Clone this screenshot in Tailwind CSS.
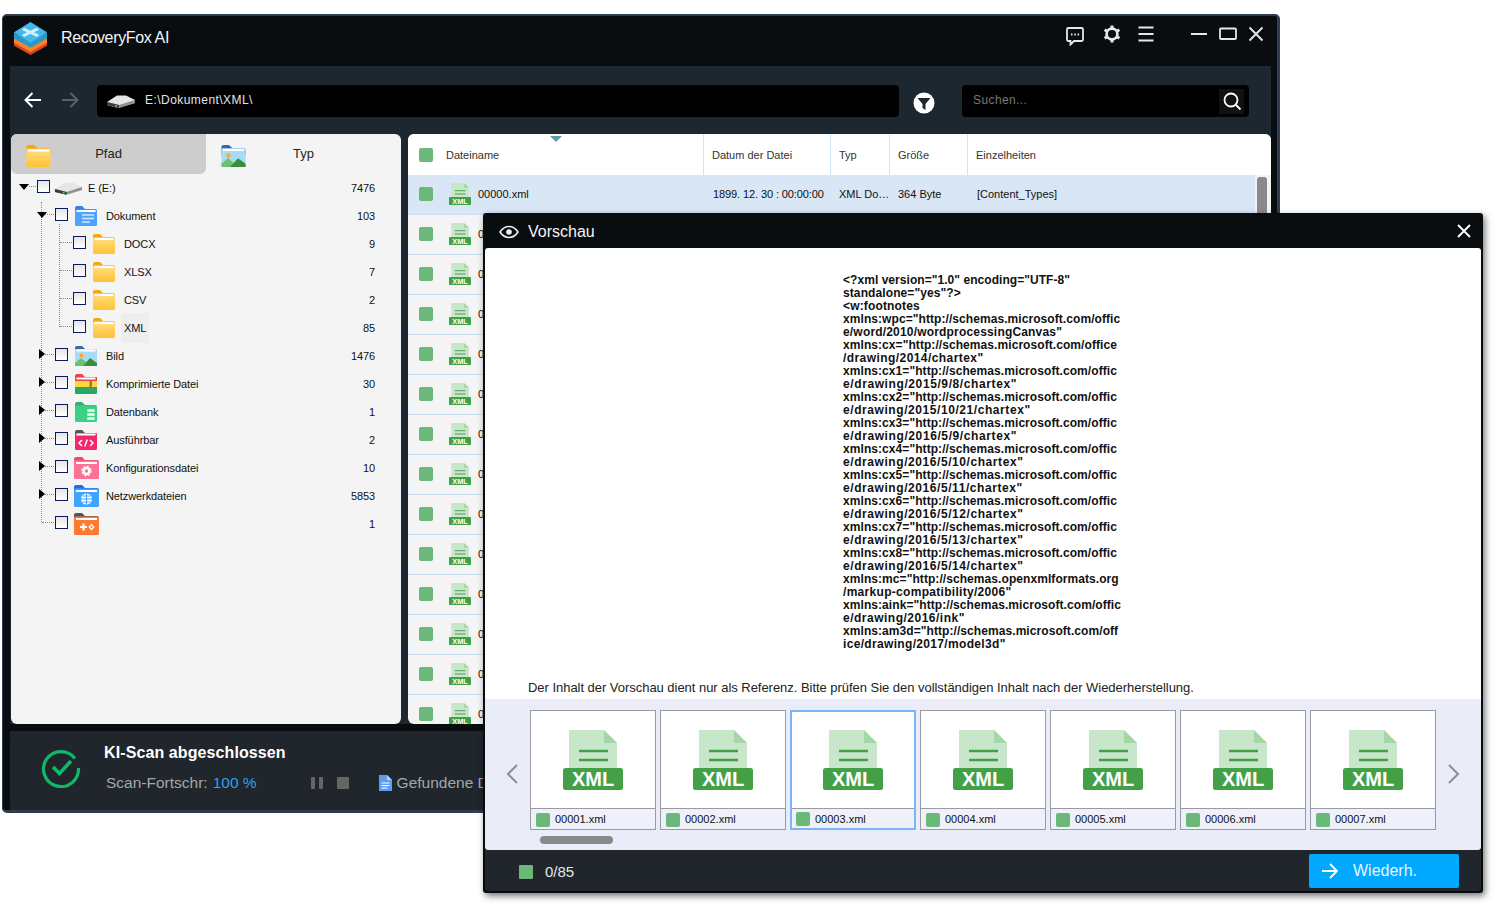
<!DOCTYPE html>
<html lang="en">
<head>
<meta charset="UTF-8">
<title>RecoveryFox AI</title>
<script src="https://cdn.jsdelivr.net/npm/@tailwindcss/browser@4"></script>
</head>
<body class="bg-white font-['Liberation_Sans',Arial,sans-serif] w-[1508px] h-[917px] overflow-hidden relative">

<!-- shared icons -->
<svg class="absolute w-0 h-0" width="0" height="0">
  <defs>
    <linearGradient id="yel" x1="0" y1="0" x2="0" y2="1"><stop offset="0" stop-color="#ffdf86"/><stop offset="1" stop-color="#ffc233"/></linearGradient>
    <symbol id="f-yellow" viewBox="0 0 22 20"><path d="M0 2a2 2 0 0 1 2-2h5l3 3h10a2 2 0 0 1 2 2v4H0z" fill="#f9a50c"/><rect y="3.500" width="22" height="16.500" rx="1.500" fill="url(#yel)"/><rect x="1.500" y="4" width="19" height="2" fill="#fff"/></symbol>
    <symbol id="f-blue" viewBox="0 0 22 20"><path d="M0 2a2 2 0 0 1 2-2h5l3 3h10a2 2 0 0 1 2 2v4H0z" fill="#2f80f5"/><rect y="3.500" width="22" height="16.500" rx="1.500" fill="#4da3ff"/><rect x="1.500" y="4" width="19" height="2" fill="#fff"/><path d="M7 9h12M7 12.500h12M7 16h8" stroke="#d6e9ff" stroke-width="1.600"/></symbol>
    <symbol id="f-pic" viewBox="0 0 22 20"><path d="M0 2a2 2 0 0 1 2-2h5l3 3h10a2 2 0 0 1 2 2v4H0z" fill="#2f6da8"/><rect y="3" width="22" height="17" rx="1" fill="#a8dcf5"/><rect x="1.500" y="3.500" width="19" height="2" fill="#fff"/><circle cx="6.500" cy="9.500" r="2" fill="#ffa726"/><path d="M0 20v-3l6-5 6 5v3z" fill="#6cc16e"/><path d="M8 20l7-8 7 5v3z" fill="#388e3c"/></symbol>
    <symbol id="f-zip" viewBox="0 0 22 20"><path d="M0 2a2 2 0 0 1 2-2h5l3 3h10a2 2 0 0 1 2 2v4H0z" fill="#ef3f4f"/><rect y="3" width="22" height="7" fill="#ef3f4f"/><rect y="7" width="22" height="7" fill="#fbd83a"/><path d="M0 13h22v6a1 1 0 0 1-1 1H1a1 1 0 0 1-1-1z" fill="#23a866"/><rect x="1.500" y="3.500" width="19" height="2" fill="#fff"/><path d="M14.500 7h2.500v10h-2.500z" fill="#8b7a5a"/></symbol>
    <symbol id="f-db" viewBox="0 0 22 20"><path d="M0 2a2 2 0 0 1 2-2h5l3 3h10a2 2 0 0 1 2 2v4H0z" fill="#2fb573"/><rect y="3.500" width="22" height="16.500" rx="1.500" fill="#3ccf86"/><rect x="12" y="7" width="8" height="3" rx="1.500" fill="#d8f7e6"/><rect x="12" y="11" width="8" height="3" rx="1.500" fill="#d8f7e6"/><rect x="12" y="15" width="8" height="3" rx="1.500" fill="#d8f7e6"/></symbol>
    <symbol id="f-exe" viewBox="0 0 22 20"><path d="M0 2a2 2 0 0 1 2-2h5l3 3h10a2 2 0 0 1 2 2v4H0z" fill="#555"/><rect y="3" width="22" height="17" rx="1.500" fill="#f2286b"/><rect x="1.500" y="3.500" width="19" height="2" fill="#fff"/><path d="M7 10l-3 3 3 3M15 10l3 3-3 3M12.300 9.500l-2.600 7" fill="none" stroke="#fff" stroke-width="1.500"/></symbol>
    <symbol id="f-cfg" viewBox="0 0 25 22"><path d="M0 2a2 2 0 0 1 2-2h6l3 3h12a2 2 0 0 1 2 2v4H0z" fill="#ef4a6c"/><rect y="3.500" width="25" height="18.500" rx="1.500" fill="#ff7097"/><rect x="2" y="5" width="21" height="2" fill="#fff"/><circle cx="12.500" cy="14" r="3" fill="none" stroke="#fff" stroke-width="2.400"/><circle cx="12.500" cy="14" r="4.600" fill="none" stroke="#fff" stroke-width="1.200" stroke-dasharray="2 1.600"/></symbol>
    <symbol id="f-net" viewBox="0 0 25 22"><path d="M0 2a2 2 0 0 1 2-2h6l3 3h12a2 2 0 0 1 2 2v4H0z" fill="#1f6af0"/><rect y="3.500" width="25" height="18.500" rx="1.500" fill="#3fa4ff"/><rect x="2" y="5" width="21" height="2" fill="#fff"/><circle cx="12.500" cy="14" r="5.500" fill="#fff"/><path d="M7 14h11M12.500 8.500v11M8.500 11h8M8.500 17h8" stroke="#3fa4ff" stroke-width="1"/></symbol>
    <symbol id="f-game" viewBox="0 0 25 22"><path d="M0 2a2 2 0 0 1 2-2h6l3 3h12a2 2 0 0 1 2 2v4H0z" fill="#555"/><rect y="3.500" width="25" height="18.500" rx="1.500" fill="#ff7a2e"/><rect x="2" y="5" width="21" height="2" fill="#fff"/><path d="M6 14h7M9.500 10.500v7" stroke="#fff" stroke-width="2.200"/><path d="M17.500 11.500l2.200 2.500-2.200 2.500-2.200-2.500z" fill="none" stroke="#fff" stroke-width="1.200"/></symbol>
    <symbol id="drive" viewBox="0 0 30 15"><path d="M1 8L11 1.500h9L29 6v3L12 14 1 11z" fill="#e6e6e6"/><path d="M1 8l12 3 16-5v3L13 14 1 11z" fill="#8f8f8f"/><path d="M1 8l12 3v3L1 11z" fill="#3c3c3c"/><rect x="9" y="11" width="2" height="1.500" fill="#3ddc6a"/></symbol>
    <symbol id="xml" viewBox="0 0 60 60"><path d="M6 0h35l13 13v30H6z" fill="#c8e6c9"/><path d="M41 0l13 13H41z" fill="#a5d6a7"/><path d="M16 21h29M16 30h29" stroke="#43a047" stroke-width="2.600"/><rect y="38" width="60" height="22" rx="2.500" fill="#43a047"/><text x="30" y="56" text-anchor="middle" font-family="Liberation Sans, Arial, sans-serif" font-weight="700" font-size="20" fill="#fff">XML</text></symbol>
  </defs>
</svg>

<!-- main window -->
<div class="absolute left-[2px] top-[14px] w-[1278px] h-[799px] flex flex-col bg-[#0a0d10] border border-[#2f3d50] border-t-2 border-r-[3px] border-b-[3px] rounded-[5px] overflow-hidden">
  <!-- title bar -->
  <div class="h-[50px] shrink-0 flex items-center text-white relative">
    <svg class="ml-[11px] -mt-[5px] w-[33px] h-[33px]" viewBox="0 0 32 32">
      <path d="M0 17l16 9 16-9v6l-16 9-16-9z" fill="#d8421d"/>
      <path d="M0 14l16 9 16-9v6l-16 9-16-9z" fill="#f5862a"/>
      <path d="M0 10l16 9 16-9v6l-16 9-16-9z" fill="#2f97c4"/>
      <path d="M16 0l16 10-16 10L0 10z" fill="#42b9ec"/>
      <path d="M10 5.500l6 3 6-3 2.500 2-5 2.500 5 2.500-2.500 2-6-3-6 3-2.500-2 5-2.500-5-2.500z" fill="#d3eefa"/>
    </svg>
    <span class="ml-[14px] -mt-[7px] text-[16px] tracking-[-0.35px] text-[#f2f5f7]">RecoveryFox AI</span>
    <div class="ml-auto flex items-center -mt-[14px] mr-[11px]">
      <svg class="w-5 h-5 mt-[4px]" viewBox="0 0 20 20" fill="none" stroke="#e8e8e8" stroke-width="1.800"><path d="M3.500 2h13A1.500 1.500 0 0 1 18 3.500v10a1.500 1.500 0 0 1-1.500 1.500H9l-3.500 3.500V15h-2A1.500 1.500 0 0 1 2 13.500v-10A1.500 1.500 0 0 1 3.500 2z"/><path d="M6 8.500h1.500M9.300 8.500h1.500M12.600 8.500h1.500" stroke-width="2"/></svg>
      <svg class="w-5 h-5 ml-[17px]" viewBox="0 0 20 20" fill="none" stroke="#e8e8e8"><circle cx="10" cy="10" r="5.400" stroke-width="2.600"/><path d="M10 1.500v3M10 15.500v3M2.600 5.750l2.600 1.500M14.800 12.750l2.600 1.500M2.600 14.250l2.600-1.500M14.800 7.250l2.600-1.500" stroke-width="3"/></svg>
      <svg class="w-5 h-5 ml-[14px]" viewBox="0 0 20 20" stroke="#e8e8e8" stroke-width="1.800"><path d="M2.500 3.500h15M2.500 10h15M2.500 16.500h15"/></svg>
      <svg class="w-5 h-5 ml-[33px]" viewBox="0 0 20 20" stroke="#e8e8e8" stroke-width="1.800"><path d="M2 10h16"/></svg>
      <svg class="w-5 h-5 ml-[9px]" viewBox="0 0 20 20" fill="none" stroke="#e8e8e8" stroke-width="1.800"><rect x="2" y="4.500" width="16" height="10.500" rx="1"/></svg>
      <svg class="w-5 h-5 ml-[8px]" viewBox="0 0 20 20" stroke="#e8e8e8" stroke-width="1.800"><path d="M3.500 3.500l13 13M16.500 3.500l-13 13"/></svg>
    </div>
  </div>

  <!-- body -->
  <div class="flex-1 mx-[7px] bg-[#1c2730] flex flex-col min-h-0 w-[1261px]">
    <!-- toolbar -->
    <div class="h-[68px] shrink-0 flex items-center">
      <svg class="w-5 h-5 ml-[13px] -mt-[1px]" viewBox="0 0 20 20" fill="none" stroke="#fff" stroke-width="2"><path d="M18 10H3M9.500 3l-7 7 7 7"/></svg>
      <svg class="w-5 h-5 ml-[17px] -mt-[1px]" viewBox="0 0 20 20" fill="none" stroke="#5a6268" stroke-width="2"><path d="M2 10h15M10.500 3l7 7-7 7"/></svg>
      <div class="ml-[17px] w-[802px] h-8 mt-[2px] bg-black rounded-[4px] flex items-center">
        <svg class="w-[30px] h-[15px] ml-[9px]"><use href="#drive"/></svg>
        <span class="ml-[9px] -mt-[2px] text-[12px] tracking-[0.45px] text-[#e4e4e4]">E:\Dokument\XML\</span>
      </div>
      <svg class="w-[22px] h-[22px] ml-[14px] mt-[5px]" viewBox="0 0 22 22"><circle cx="11" cy="11" r="10.500" fill="#fff"/><path d="M4.500 6h13l-5 6v6l-3-2v-4z" fill="#1c2730"/></svg>
      <div class="ml-[27px] w-[287px] h-8 mt-[2px] bg-black rounded-[4px] flex items-center">
        <span class="ml-[11px] -mt-[2px] text-[12px] tracking-[0.4px] text-[#777]">Suchen...</span>
        <div class="ml-auto mr-[5px] w-[25px] h-[25px] bg-[#111] flex items-center justify-center">
          <svg class="w-5 h-5" viewBox="0 0 20 20" fill="none" stroke="#fff" stroke-width="1.800"><circle cx="9" cy="9" r="6.500"/><path d="M14 14l4.500 4.500"/></svg>
        </div>
      </div>
    </div>

    <!-- panels -->
    <div class="h-[590px] shrink-0 flex pl-[1px] gap-[7px]">
      <!-- tree panel -->
      <div class="w-[390px] bg-[#f4f4f4] rounded-[6px] overflow-hidden flex flex-col">
        <div class="h-10 shrink-0 flex text-[13px] text-[#222]">
          <div class="w-[195px] bg-[#cdcdcd] rounded-b-[6px] flex items-center relative">
            <svg class="absolute left-[15px] top-[11px] w-[25px] h-[22px]"><use href="#f-yellow"/></svg>
            <span class="w-full text-center">Pfad</span>
          </div>
          <div class="w-[195px] flex items-center relative">
            <svg class="absolute left-[15px] top-[11px] w-[25px] h-[22px]"><use href="#f-pic"/></svg>
            <span class="w-full text-center">Typ</span>
          </div>
        </div>
        <div id="tree" class="relative"></div>
      </div>

      <!-- file list panel -->
      <div class="w-[863px] bg-[#f4f4f4] rounded-[6px] overflow-hidden flex flex-col relative">
        <div class="h-[41px] shrink-0 bg-white flex items-center text-[11px] text-[#333] relative">
          <span class="absolute left-[142px] top-[2px] w-0 h-0 border-l-[6px] border-r-[6px] border-t-[6px] border-l-transparent border-r-transparent border-t-[#5f9bab]"></span>
          <span class="w-[14px] h-[14px] rounded-[2px] bg-[#6bb87a] ml-[11px]"></span>
          <span class="w-[271px] pl-[13px] pt-[2px] h-full flex items-center border-r border-[#cfe4f5]">Dateiname</span>
          <span class="w-[127px] pl-[8px] pt-[2px] h-full flex items-center border-r border-[#cfe4f5]">Datum der Datei</span>
          <span class="w-[59px] pl-[8px] pt-[2px] h-full flex items-center border-r border-[#cfe4f5]">Typ</span>
          <span class="w-[78px] pl-[8px] pt-[2px] h-full flex items-center border-r border-[#cfe4f5]">Größe</span>
          <span class="pl-[8px] pt-[2px]">Einzelheiten</span>
        </div>
        <div id="rows" class="flex-1 min-h-0 overflow-hidden"></div>
        <div class="absolute right-[4px] top-[43px] w-[10px] h-[120px] bg-[#8a8a8a] rounded-[3px]"></div>
      </div>
    </div>

    <div class="h-[7px] shrink-0 bg-[#0a0d10]"></div>

    <!-- scan status -->
    <div class="flex-1 ml-[1px] bg-[#20262c] rounded-[6px] relative flex items-center">
      <svg class="ml-[30px] -mt-[6px] w-10 h-10" viewBox="0 0 40 40" fill="none" stroke="#10b968" stroke-width="3.200"><path d="M34 10.500A17.500 17.500 0 1 0 37.500 20"/><path d="M12 19l6.500 6.500L30 13" stroke-width="3.600"/></svg>
      <div class="ml-[23px] -mt-[6px] flex flex-col">
        <span class="text-[16px] font-bold tracking-[0.1px] text-white leading-5">KI-Scan abgeschlossen</span>
        <div class="mt-[10px] pl-[2px] flex items-center text-[15.500px] leading-5 text-[#a2a8ae]">
          <span>Scan-Fortschr:</span><span class="ml-[5px] text-[#2ea0f0]">100 %</span>
          <span class="ml-[54px] w-[4px] h-3 bg-[#666] rounded-[1px]"></span><span class="ml-[4px] w-[4px] h-3 bg-[#666] rounded-[1px]"></span>
          <span class="ml-[14px] w-3 h-3 bg-[#666] rounded-[1px]"></span>
          <svg class="ml-[29px] w-[14px] h-4" viewBox="0 0 14 16"><path d="M1 0h8l5 5v11H1z" fill="#5d9cf0"/><path d="M9 0l5 5H9z" fill="#b5d2f8"/><path d="M3.500 8h8M3.500 10.500h8M3.500 13h6" stroke="#fff" stroke-width="1"/></svg>
          <span class="ml-[5px] whitespace-nowrap">Gefundene Dateien</span>
        </div>
      </div>
    </div>
  </div>
</div>

<!-- preview window -->
<div class="absolute left-[483px] top-[213px] w-[1000px] h-[680px] flex flex-col bg-[#0a0d10] rounded-[3px] shadow-[2px_3px_7px_rgba(0,0,0,0.55)]">
  <div class="h-[35px] shrink-0 flex items-center text-white">
    <svg class="ml-[16px] mt-[2px] w-5 h-5" viewBox="0 0 20 20" fill="none" stroke="#eee" stroke-width="1.600"><path d="M1 10c2.500-3.800 5.500-5.500 9-5.500s6.500 1.700 9 5.500c-2.500 3.800-5.500 5.500-9 5.500S3.500 13.800 1 10z"/><circle cx="10" cy="10" r="2.800" fill="#eee" stroke="none"/></svg>
    <span class="ml-[9px] mt-[2px] text-[16px] text-[#f2f5f7]">Vorschau</span>
    <svg class="ml-auto mr-[11px] w-[16px] h-[16px]" viewBox="0 0 16 16" stroke="#fff" stroke-width="1.900"><path d="M2 2l12 12M14 2L2 14"/></svg>
  </div>
  <div class="ml-[2px] mr-[2px] bg-white h-[451px] shrink-0 flex flex-col rounded-t-[3px] overflow-hidden">
    <div class="pl-[358px] pt-[26px] flex-1 font-bold text-[12px] leading-[13px] text-[#111] whitespace-nowrap">
      <div class="tracking-[0.05px]">&lt;?xml version="1.0" encoding="UTF-8"</div>
      <div class="tracking-[0.1px]">standalone="yes"?&gt;</div>
      <div class="tracking-[0.15px]">&lt;w:footnotes</div>
      <div class="tracking-[0.07px]">xmlns:wpc="http://schemas.microsoft.com/offic</div>
      <div class="tracking-[0.18px]">e/word/2010/wordprocessingCanvas"</div>
      <div class="tracking-[0.07px]">xmlns:cx="http://schemas.microsoft.com/office</div>
      <div class="tracking-[0.43px]">/drawing/2014/chartex"</div>
      <div class="tracking-[0.07px]">xmlns:cx1="http://schemas.microsoft.com/offic</div>
      <div class="tracking-[0.6px]">e/drawing/2015/9/8/chartex"</div>
      <div class="tracking-[0.07px]">xmlns:cx2="http://schemas.microsoft.com/offic</div>
      <div class="tracking-[0.57px]">e/drawing/2015/10/21/chartex"</div>
      <div class="tracking-[0.07px]">xmlns:cx3="http://schemas.microsoft.com/offic</div>
      <div class="tracking-[0.6px]">e/drawing/2016/5/9/chartex"</div>
      <div class="tracking-[0.07px]">xmlns:cx4="http://schemas.microsoft.com/offic</div>
      <div class="tracking-[0.57px]">e/drawing/2016/5/10/chartex"</div>
      <div class="tracking-[0.07px]">xmlns:cx5="http://schemas.microsoft.com/offic</div>
      <div class="tracking-[0.57px]">e/drawing/2016/5/11/chartex"</div>
      <div class="tracking-[0.07px]">xmlns:cx6="http://schemas.microsoft.com/offic</div>
      <div class="tracking-[0.57px]">e/drawing/2016/5/12/chartex"</div>
      <div class="tracking-[0.07px]">xmlns:cx7="http://schemas.microsoft.com/offic</div>
      <div class="tracking-[0.57px]">e/drawing/2016/5/13/chartex"</div>
      <div class="tracking-[0.07px]">xmlns:cx8="http://schemas.microsoft.com/offic</div>
      <div class="tracking-[0.57px]">e/drawing/2016/5/14/chartex"</div>
      <div class="tracking-[0.07px]">xmlns:mc="http://schemas.openxmlformats.org</div>
      <div class="tracking-[0.3px]">/markup-compatibility/2006"</div>
      <div class="tracking-[0.07px]">xmlns:aink="http://schemas.microsoft.com/offic</div>
      <div class="tracking-[0.5px]">e/drawing/2016/ink"</div>
      <div class="tracking-[0.07px]">xmlns:am3d="http://schemas.microsoft.com/off</div>
      <div class="tracking-[0.33px]">ice/drawing/2017/model3d"</div>
    </div>
    <p class="pl-[43px] pb-[4px] text-[13px] tracking-[-0.035px] leading-[15px] text-[#222]">Der Inhalt der Vorschau dient nur als Referenz. Bitte prüfen Sie den vollständigen Inhalt nach der Wiederherstellung.</p>
  </div>
  <!-- thumbnails -->
  <div class="ml-[2px] mr-[2px] h-[151px] shrink-0 bg-[#eaedf7] rounded-b-[3px] relative">
    <div class="flex items-center pt-[11px]">
      <svg class="ml-[20px] mt-[8px] w-[14px] h-6" viewBox="0 0 14 24" fill="none" stroke="#8a8e99" stroke-width="2"><path d="M12 3L3 12l9 9"/></svg>
      <div id="thumbs" class="ml-[11px] flex gap-1"></div>
      <svg class="ml-[11px] mt-[8px] w-[14px] h-6" viewBox="0 0 14 24" fill="none" stroke="#8a8e99" stroke-width="2"><path d="M2 3l9 9-9 9"/></svg>
    </div>
    <div class="absolute left-[55px] bottom-[6px] w-[73px] h-2 rounded-[4px] bg-[#8a8a8a]"></div>
  </div>
  <div class="flex-1 bg-[#20262c] flex items-center rounded-b-[3px] ml-[2px] mr-[2px] mb-[2px]">
    <span class="ml-[34px] translate-y-[1px] w-[14px] h-[14px] rounded-[1px] bg-[#6bb87a]"></span>
    <span class="ml-[12px] translate-y-[2px] text-[15px] text-[#e4e6e8]">0/85</span>
    <button class="ml-auto mr-[22px] w-[150px] h-[34px] rounded-[2px] bg-[#00a8ff] flex items-center text-[16px] text-[#e8f6ff]">
      <svg class="ml-[12px] w-[18px] h-[18px]" viewBox="0 0 18 18" fill="none" stroke="#fff" stroke-width="1.800"><path d="M1 9h15M9 2l7 7-7 7"/></svg>
      <span class="ml-[14px]">Wiederh.</span>
    </button>
  </div>
</div>

<script>
  // tree rows: [level, icon, label, count, arrow]
  const treeData = [
    [0, "drive", "E (E:)", "7476", "down"],
    [1, "f-blue", "Dokument", "103", "down"],
    [2, "f-yellow", "DOCX", "9", ""],
    [2, "f-yellow", "XLSX", "7", ""],
    [2, "f-yellow", "CSV", "2", ""],
    [2, "f-yellow", "XML", "85", ""],
    [1, "f-pic", "Bild", "1476", "right"],
    [1, "f-zip", "Komprimierte Datei", "30", "right"],
    [1, "f-db", "Datenbank", "1", "right"],
    [1, "f-exe", "Ausführbar", "2", "right"],
    [1, "f-cfg", "Konfigurationsdatei", "10", "right"],
    [1, "f-net", "Netzwerkdateien", "5853", "right"],
    [1, "f-game", "", "1", ""],
  ];
  const pad = ["pl-[26px]", "pl-[44px]", "pl-[62px]"];
  let treeHtml = `
    <span class="absolute left-[30px] top-[28px] h-[320px] border-l border-dotted border-[#888]"></span>
    <span class="absolute left-[48px] top-[50px] h-[103px] border-l border-dotted border-[#888]"></span>`;
  treeData.forEach((r) => {
    const [lvl, icon, label, count, arrow] = r;
    const wide = icon === "f-cfg" || icon === "f-net" || icon === "f-game";
    let iconHtml;
    if (icon === "drive") iconHtml = `<svg class="ml-[4px] w-[29px] h-[15px]"><use href="#drive"/></svg><span class="ml-[5px]">${label}</span>`;
    else iconHtml = `<svg class="${wide ? "ml-[6px] w-[25px] h-[22px] mr-[7px]" : "ml-[7px] w-[22px] h-[20px] mr-[9px]"}"><use href="#${icon}"/></svg><span class="${label === "XML" ? "bg-[#eeeeee] -ml-[3px] px-[3px] py-[7px] leading-4" : ""}">${label}</span>`;
    let arrowHtml = "";
    if (arrow === "down") arrowHtml = `<span class="absolute ${lvl === 0 ? "left-[8px]" : "left-[26px]"} top-[10px] w-0 h-0 border-l-[5px] border-r-[5px] border-t-[6px] border-l-transparent border-r-transparent border-t-black"></span>`;
    if (arrow === "right") arrowHtml = `<span class="absolute left-[28px] top-[7px] w-0 h-0 border-t-[5px] border-b-[5px] border-l-[6px] border-t-transparent border-b-transparent border-l-black"></span>`;
    let stub = "";
    if (lvl === 0) stub = `<span class="absolute left-[18px] top-[12px] w-[7px] border-t border-dotted border-[#888]"></span>`;
    if (lvl === 1) stub = `<span class="absolute left-[31px] top-[12px] w-[12px] border-t border-dotted border-[#888]"></span>`;
    if (lvl === 2) stub = `<span class="absolute left-[49px] top-[12px] w-[12px] border-t border-dotted border-[#888]"></span>`;
    treeHtml += `<div class="relative h-7 flex items-center text-[11px] tracking-[-0.1px] text-[#111] ${pad[lvl]} pr-[26px]">
      ${stub}${arrowHtml}
      <span class="relative -translate-y-[2px] w-[13px] h-[13px] border border-[#0b1a5c] bg-gradient-to-b from-[#e4e4e4] to-white"></span>
      ${iconHtml}
      <span class="ml-auto">${count}</span>
    </div>`;
  });
  document.getElementById("tree").innerHTML = treeHtml;

  // file rows
  let rowsHtml = "";
  for (let i = 0; i < 14; i++) {
    const name = String(i).padStart(5, "0") + ".xml";
    const extra = i === 0 ? `
      <span class="absolute left-[305px] tracking-[-0.1px]">1899. 12. 30 : 00:00:00</span>
      <span class="absolute left-[431px]">XML Do…</span>
      <span class="absolute left-[490px]">364 Byte</span>
      <span class="absolute left-[569px]">[Content_Types]</span>` : "";
    rowsHtml += `<div class="relative h-10 shrink-0 flex items-center text-[11px] text-[#111] border-b border-[#c9def5] pb-[1px] mr-[16px] ${i === 0 ? "bg-[#d9e6f5]" : ""}">
      <span class="ml-[11px] w-[14px] h-[14px] rounded-[2px] bg-[#6bb87a]"></span>
      <svg class="ml-[16px] w-[22px] h-[22px]"><use href="#xml"/></svg>
      <span class="ml-[7px]">${name}</span>${extra}
    </div>`;
  }
  document.getElementById("rows").innerHTML = rowsHtml;

  // thumbnails
  let thumbHtml = "";
  for (let i = 1; i <= 7; i++) {
    const sel = i === 3;
    thumbHtml += `<div class="w-[126px] h-[120px] flex flex-col ${sel ? "border-2 border-[#7ab4fa]" : "border border-[#9a9aa2]"}">
      <div class="flex-1 bg-white flex justify-center items-start ${sel ? "pt-[18px]" : "pt-[19px]"}"><svg class="w-[60px] h-[60px]"><use href="#xml"/></svg></div>
      <div class="${sel ? "h-[20px]" : "h-[21px]"} shrink-0 bg-[#eef0fa] border-t border-[#9a9aa2] flex items-center pt-[1px] text-[11px] text-[#111]">
        <span class="${sel ? "ml-[4px]" : "ml-[5px]"} w-[14px] h-[14px] rounded-[2px] bg-[#6bb87a]"></span>
        <span class="ml-[5px]">0000${i}.xml</span>
      </div>
    </div>`;
  }
  document.getElementById("thumbs").innerHTML = thumbHtml;
</script>
</body>
</html>
